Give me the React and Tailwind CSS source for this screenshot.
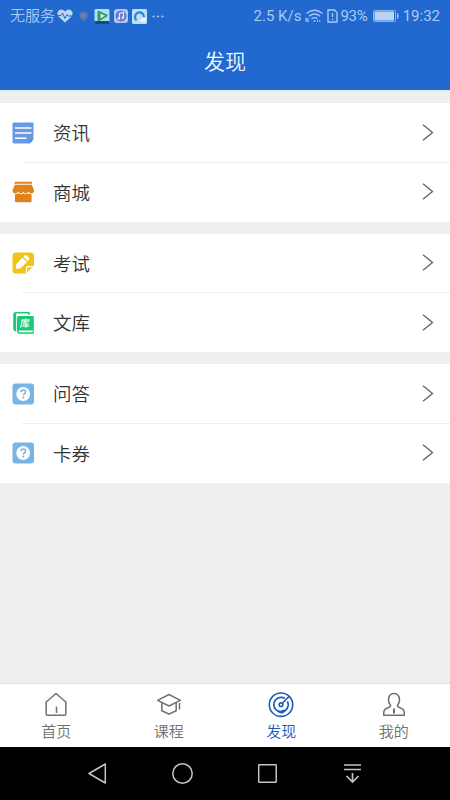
import clsx from 'clsx';

const NewsIcon = () => (
  <svg width="22" height="22" viewBox="0 0 22 22">
    <path d="M.5 1.5 1.500.5H21.500V17l-4 4.500H1.500L.5 20.500Z" fill="#6699e8" />
    <path d="M3 6h16.500M3 11h16.500M3 16.300h11.500" stroke="#fff" strokeWidth="1.600" />
    <path d="M17.500 21.500V17.500H21.500Z" fill="#5083d6" />
  </svg>
);

const ShopIcon = () => (
  <svg width="22" height="22" viewBox="0 0 22 22">
    <path d="M3.500.8h15.500q1 0 1 1v.9H2.500v-.9q0-1 1-1Z" fill="#e0811a" />
    <path d="M2.800 3.700h17l2.400 5.800q-.4 3-2.900 3-2 0-2.900-1.900-.9 1.900-2.500 1.900-1.800 0-2.600-1.900-.8 1.900-2.600 1.900-1.600 0-2.500-1.900-.9 1.900-2.900 1.900-2.500 0-2.900-3Z" fill="#e0811a" />
    <path d="M3 13.300q2.100.2 3.300-1.100 2.500 2 5 .1 2.500 1.900 5-.1 1.200 1.300 3.300 1.100V20q0 1.300-1.300 1.300h-14Q3 21.300 3 20Z" fill="#e0811a" />
  </svg>
);

const ExamIcon = () => (
  <svg width="22" height="22" viewBox="0 0 22 22">
    <path d="M4 .5h14.500Q22 .5 22 4v10.500l-7 7H4Q.5 21.500.5 18V4Q.5.5 4 .5Z" fill="#f0c51b" />
    <path d="m4.300 12.300 6.200-6.600 4.500 4.300-6.500 6.200-4.500.7ZM11.500 4.800l1.500-1.500q.7-.6 1.400 0l2.600 2.500q.7.700 0 1.400l-1.300 1.800Z" fill="#fff" />
    <path d="M13.800 21.500V16q0-2 2-2H22v.5l-7 7Z" fill="#fff" />
    <path d="M15 20.300v-3.500q0-1.600 1.600-1.600h3.600Z" fill="#f0c51b" />
  </svg>
);

const LibraryIcon = () => (
  <div className="relative h-[22px] w-[22px]">
    <svg width="22" height="22" viewBox="0 0 22 22">
      <path d="M4 18.500H3.300q-1.300 0-1.300-1.300V2.500Q2 .8 3.700.8H17v2" fill="none" stroke="#18c978" strokeWidth="1.500" />
      <path d="M2 1.500h2.200V18H2Z" fill="#18c978" />
      <path d="M7 4h14.800v14.500H7.800q-1.300 0-1.300.9t1.300.9h14v1.500H7.500Q5 21.800 5 19.300V6q0-2 2-2Z" fill="#18c978" />
      <path d="M21.300 18v3" stroke="#18c978" strokeWidth="1" />
    </svg>
    <span className="absolute top-[5px] left-[8px] -skew-x-6 text-[10px] leading-[12px] font-medium text-white">库</span>
  </div>
);

const QuestionIcon = () => (
  <svg width="22" height="22" viewBox="0 0 22 22">
    <rect x=".5" y=".5" width="21.500" height="21" rx="3" fill="#78b5e5" />
    <circle cx="11.200" cy="11" r="6.900" fill="#fff" />
    <path d="M8.900 9.300q.1-2.300 2.400-2.300 2.300 0 2.300 2 0 1.100-1.200 1.800-1.100.7-1.100 1.700" fill="none" stroke="#78b5e5" strokeWidth="1.600" />
    <circle cx="11.300" cy="14.600" r="1" fill="#78b5e5" />
  </svg>
);

const HomeIcon = () => (
  <svg width="26" height="26" viewBox="0 0 26 26" fill="none" stroke="currentColor" strokeWidth="1.500" strokeLinejoin="round">
    <path d="M13 1.500 22.800 10v12.300q0 1-1 1H4.200q-1 0-1-1V10Z" />
    <path d="M13.500 14.500v6.500" />
  </svg>
);

const CourseIcon = () => (
  <svg width="26" height="26" viewBox="0 0 26 26" fill="none" stroke="currentColor" strokeWidth="1.500" strokeLinejoin="round">
    <path d="m13 2.500 11.300 5.800L13 14 1.700 8.300Z" />
    <path d="M5.800 10.500v8.200q3 1.300 7.200 3.500 4.200-2.200 7.200-3.500v-8.200M23.500 11v6.500" />
  </svg>
);

const DiscoverIcon = () => (
  <svg width="26" height="26" viewBox="0 0 26 26" fill="none" stroke="currentColor" strokeWidth="1.600">
    <circle cx="13" cy="12.700" r="11.700" />
    <path d="M16.800 6.500A7.200 7.200 0 1 0 19.400 9.300" />
    <path d="M21 4.500 14.300 11.300" />
    <circle cx="13" cy="12.700" r="1.800" />
    <path d="M10.500 18.300q2.500 1 5.500-1l1.500 2.200q-2 2-4 2t-4-1.800Z" fill="currentColor" stroke="none" />
  </svg>
);

const MineIcon = () => (
  <svg width="26" height="26" viewBox="0 0 26 26" fill="none" stroke="currentColor" strokeWidth="1.500" strokeLinejoin="round">
    <path d="M9.700 13.500Q7.300 11 7.500 7.500 8 1.500 13 1.500t5.500 6q.2 3.500-2.200 6 .2 1.700 3.700 2.700 3.300 1 3.300 5.200v1.900H2.700v-1.900q0-4.200 3.300-5.200 3.500-1 3.700-2.700Z" />
    <path d="M13 16.500v5" strokeWidth="2" />
  </svg>
);

const Chevron = () => (
  <svg width="12" height="18" viewBox="0 0 12 18" fill="none" stroke="#666" strokeWidth="1.400">
    <path d="m1 .8 9.500 7.700L1 16.200" />
  </svg>
);

const groups = [
  [
    { label: '资讯', icon: NewsIcon },
    { label: '商城', icon: ShopIcon },
  ],
  [
    { label: '考试', icon: ExamIcon },
    { label: '文库', icon: LibraryIcon },
  ],
  [
    { label: '问答', icon: QuestionIcon },
    { label: '卡券', icon: QuestionIcon },
  ],
];

const tabs = [
  { label: '首页', icon: HomeIcon },
  { label: '课程', icon: CourseIcon },
  { label: '发现', icon: DiscoverIcon, active: true },
  { label: '我的', icon: MineIcon },
];

const StatusBar = () => (
  <div className="flex h-8 items-center pr-[10px] pl-[10px] font-['Roboto','Noto_Sans_CJK_SC',sans-serif] text-[15px] leading-8 text-[#a9caf5]">
    <span className="font-[350]">无服务</span>
    <svg className="ml-[2px]" width="16" height="14" viewBox="0 0 16 14">
      <path d="M8 13.500 2 8Q-.8 5 1.300 2 4.500-1 8 2.500 11.500-1 14.700 2q2.100 3-.7 6Z" fill="#b9d6f5" />
      <path d="M0 6.500h4l1.500-2.500L8 9.500l2-4 1 1.500h5" fill="none" stroke="#2369cf" />
    </svg>
    <svg className="ml-[6px]" width="9" height="10" viewBox="0 0 9 10">
      <path d="M4.500 0 8.500 2v4q-1 3-4 4-3-1-4-4V2Z" fill="#5579b0" />
      <circle cx="4.500" cy="4.500" r="2" fill="#6c83a7" />
    </svg>
    <svg className="ml-[6px]" width="16" height="15" viewBox="0 0 16 15">
      <rect x=".5" width="15" height="15" rx="1.500" fill="#b5dcee" />
      <path d="M.5 12h15v3H.5Z" fill="#164b73" />
      <path d="M3.500 3q0-1.700 1.700-1L13 5.500q1.500 1 0 2L5.500 12q-2 .5-2-1Z" fill="#2a9e78" />
      <path d="m6.500 4.500 4.500 2.200-4.500 2.800Z" fill="#f5e9a0" />
    </svg>
    <svg className="ml-1" width="14" height="14" viewBox="0 0 14 14">
      <rect width="14" height="14" rx="3" fill="#b5c9f5" />
      <circle cx="7" cy="7" r="5.500" fill="#647bd0" />
      <path d="M5.500 9.500V4.500l4-1v5" fill="none" stroke="#e2eaff" strokeWidth="1.200" />
      <circle cx="4.800" cy="9.500" r="1.200" fill="#e2eaff" />
      <circle cx="8.800" cy="8.700" r="1.200" fill="#e2eaff" />
    </svg>
    <svg className="ml-1" width="15" height="15" viewBox="0 0 15 15">
      <rect width="15" height="15" rx="1.500" fill="#c0dff7" />
      <path d="M4.500 11.300A4.500 4.500 0 1 1 12 8" fill="none" stroke="#2682d8" strokeWidth="2.200" />
      <path d="M7.500 12.500q1.500-4 6.500-3.500v3.500Z" fill="#edf7ff" />
    </svg>
    <svg className="ml-[5px]" width="12" height="3" viewBox="0 0 12 3" fill="currentColor">
      <circle cx="1.500" cy="1.500" r="1.100" />
      <circle cx="6" cy="1.500" r="1.100" />
      <circle cx="10.500" cy="1.500" r="1.100" />
    </svg>
    <span className="ml-auto">2.5 K/s</span>
    <svg className="ml-[4px]" width="18" height="14" viewBox="0 0 18 14" fill="none" stroke="currentColor" strokeWidth="1.400">
      <path d="M1.500 4.500Q9.500-2 17.500 4.500M4 7.200Q9.500 2.700 15 7.200M6.500 9.800q3-2.300 6 0M8.500 12h2" />
      <path d="M1 13V9l2 4V9M12.500 13v-2M14.800 13v-2" strokeWidth="1" />
    </svg>
    <svg className="ml-[4px]" width="11" height="14" viewBox="0 0 11 14" fill="none" stroke="currentColor" strokeWidth="1.400">
      <path d="M1 1h6.500l2.500 2.500V13H1ZM5.500 4v4M5.500 9.500v1.500" />
    </svg>
    <span className="ml-[2px] tracking-[-.2px]">93%</span>
    <svg className="ml-[5px]" width="26" height="12" viewBox="0 0 26 12">
      <rect x=".5" y=".5" width="22" height="11" rx="1" fill="none" stroke="#8eb6ec" />
      <rect x="1.500" y="1.500" width="19.500" height="9" fill="#b9d3f5" />
      <path d="M24.800 3.500v5" stroke="#b9d3f5" strokeWidth="1.300" />
    </svg>
    <span className="ml-[4px]">19:32</span>
  </div>
);

const MenuRow = ({ label, icon: Icon }) => (
  <div className="flex h-[59px] items-center pr-4 pl-3">
    <Icon />
    <span className="mb-px ml-[19px] flex-1 text-[18.5px] leading-7 font-[350] text-[#333]">{label}</span>
    <Chevron />
  </div>
);

export default function App() {
  return (
    <div className="flex h-[800px] w-[450px] flex-col overflow-hidden bg-[#efeff1] font-['Noto_Sans_CJK_SC',sans-serif]">
      <header className="h-[90px] bg-[#2169cf]">
        <StatusBar />
        <h1 className="pt-[13px] text-center text-[21px] leading-[30px] font-[350] text-[#f0f7ff]">发现</h1>
      </header>
      <div className="h-px bg-[#dce8fa]" />

      <main className="flex flex-1 flex-col gap-3 pt-3">
        {groups.map((items) => (
          <section key={items[0].label} className="h-[118.5px] bg-white">
            <MenuRow {...items[0]} />
            <div className="-mt-[0.5px] ml-[22px] h-px bg-[#eee]" />
            <MenuRow {...items[1]} />
          </section>
        ))}
      </main>

      <nav className="grid h-16 grid-cols-4 border-t border-[#dedee1] bg-white">
        {tabs.map(({ label, icon: Icon, active }) => (
          <div
            key={label}
            className={clsx('flex flex-col items-center pt-2', active ? 'text-[#1f5cb8]' : 'text-[#707070]')}
          >
            <Icon />
            <span className="mt-[2px] text-[15px] leading-[22px] font-[350]">{label}</span>
          </div>
        ))}
      </nav>

      <div className="flex h-[53px] items-center bg-black pl-[87px]">
        <svg width="20" height="22" viewBox="0 0 20 22" fill="none" stroke="#c4c4c4" strokeWidth="1.500" strokeLinejoin="round">
          <path d="M18.300 1v19L2 10.500Z" />
        </svg>
        <svg className="ml-[64px]" width="23" height="23" viewBox="0 0 23 23" fill="none" stroke="#c4c4c4" strokeWidth="1.500">
          <circle cx="11.500" cy="11.500" r="9.700" />
        </svg>
        <svg className="ml-[63px]" width="21" height="21" viewBox="0 0 21 21" fill="none" stroke="#c4c4c4" strokeWidth="1.500">
          <rect x="1.700" y="1.700" width="17.500" height="17.500" rx=".5" />
        </svg>
        <svg className="ml-[65px]" width="20" height="22" viewBox="0 0 20 22" fill="none" stroke="#c4c4c4" strokeWidth="1.700">
          <path d="M1 2h17M1 6.500h17M9.500 10v9.500M3.500 13l6 6 6-6" />
        </svg>
      </div>
    </div>
  );
}
